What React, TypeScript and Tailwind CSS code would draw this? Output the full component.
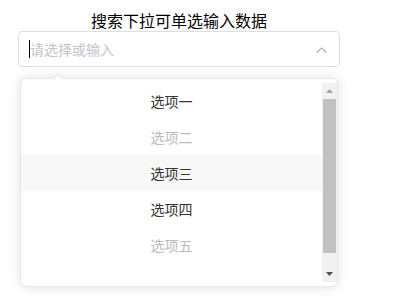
const options = [
  { label: "选项一", disabled: false },
  { label: "选项二", disabled: true },
  { label: "选项三", disabled: false, hover: true },
  { label: "选项四", disabled: false },
  { label: "选项五", disabled: true },
];

const App = () => {
  return (
    <div
      className="pt-[10px] pl-[18px] bg-white min-h-screen"
      style={{ fontFamily: '"Noto Sans CJK SC", "Noto Sans", sans-serif' }}
    >
      <div className="w-[322px]">
        {/* title */}
        <div className="text-center text-[16px] leading-[21px] text-black">搜索下拉可单选输入数据</div>
        {/* select */}
        <div className="relative">
          <div className="h-[36px] border border-[#dcdfe6] rounded-[4px] flex items-center pl-[10px] pr-[12px]">
            <span className="w-[1px] h-[18px] bg-black"></span>
            <span className="flex-1 text-[14px] text-[#c0c4cc] leading-none">请选择或输入</span>
            <svg width="11" height="6" viewBox="0 0 11 6" className="mt-[1px]">
              <path d="M0.7 5.5 L5.5 0.9 L10.3 5.5" fill="none" stroke="#a8abb2" strokeWidth="1.1" />
            </svg>
          </div>
          {/* dropdown */}
          <div className="absolute top-[47px] left-[2px] w-[318px] h-[209px] bg-white border border-[#e4e7ed] rounded-[6px] shadow-[0_0_12px_rgba(0,0,0,0.12)] py-[4px] flex">
            <div className="absolute -top-[4px] left-[33px] w-2 h-2 bg-white border-t border-l border-[#e4e7ed] rotate-45"></div>
            <div className="flex-1 flex flex-col">
              {options.map((o) => (
                <div
                  key={o.label}
                  className={
                    "h-[36px] flex items-center justify-center text-[14px] " +
                    (o.disabled ? "text-[#bbbbbb] " : "text-[#333333] ") +
                    (o.hover ? "bg-[#f8f8f8]" : "")
                  }
                >
                  {o.label}
                </div>
              ))}
            </div>
            {/* scrollbar */}
            <div className="w-[15px] bg-[#f1f1f1] flex flex-col">
              <div className="h-[16px] flex items-center justify-center">
                <svg width="7" height="4" viewBox="0 0 7 4">
                  <path d="M0 4 L3.5 0 L7 4 Z" fill="#a3a3a3" />
                </svg>
              </div>
              <div className="h-[154px] px-[1px]">
                <div className="h-full bg-[#c1c1c1]"></div>
              </div>
              <div className="flex-1"></div>
              <div className="h-[17px] flex items-center justify-center">
                <svg width="7" height="4" viewBox="0 0 7 4">
                  <path d="M0 0 L7 0 L3.5 4 Z" fill="#505050" />
                </svg>
              </div>
            </div>
          </div>
        </div>
      </div>
    </div>
  );
};

export default App;
